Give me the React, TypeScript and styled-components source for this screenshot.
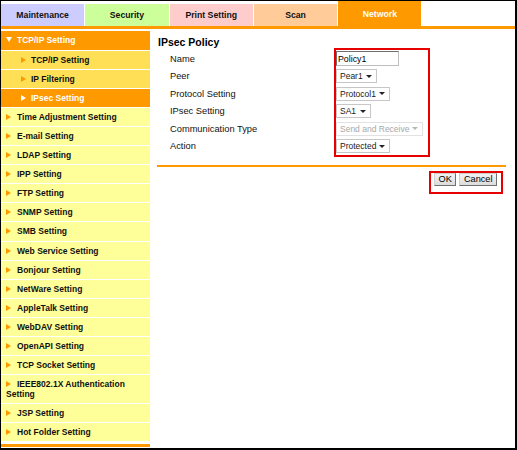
import React from "react";
import styled, { createGlobalStyle } from "styled-components";

const GlobalStyle = createGlobalStyle`
  html, body { margin: 0; padding: 0; background: #fff; }
  body { font-family: "Liberation Sans", Arial, sans-serif; }
  * { box-sizing: border-box; }
`;

const ORANGE = "#ff9900";
const RED = "#e60000";

const Frame = styled.div`
  width: 517px;
  height: 450px;
  border-style: solid;
  border-color: #000;
  border-width: 1px 2px 2px 1px;
  background: #fff;
  display: flex;
  flex-direction: column;
  overflow: hidden;
`;

const TabBar = styled.div`
  display: flex;
  align-items: flex-end;
  gap: 1px;
  height: 28px;
  border-bottom: 3px solid ${ORANGE};
`;

const Tab = styled.div<{ $bg: string; $active?: boolean }>`
  width: 83.3px;
  height: ${(p) => (p.$active ? 25 : 22)}px;
  background: ${(p) => p.$bg};
  color: ${(p) => (p.$active ? "#fff" : "#111")};
  font-size: 8.7px;
  font-weight: bold;
  display: flex;
  align-items: center;
  justify-content: center;
`;

const Body = styled.div`
  display: flex;
  flex: 1;
  margin-top: 2px;
`;

const Sidebar = styled.nav`
  width: 149px;
  display: flex;
  flex-direction: column;
`;

type Variant = "header" | "sub" | "subActive" | "main";

const rowBg: Record<Variant, string> = {
  header: ORANGE,
  sub: "#ffdf55",
  subActive: ORANGE,
  main: "#ffff99",
};

const NavRow = styled.div<{ $variant: Variant }>`
  background: ${(p) => rowBg[p.$variant]};
  color: ${(p) => (p.$variant === "header" || p.$variant === "subActive" ? "#fff" : "#111")};
  border-bottom: 1px solid #fff;
  padding: ${(p) => (p.$variant === "header" ? "4px 4px 5px" : "4px 4px 4px")};
  padding-left: ${(p) => (p.$variant === "sub" || p.$variant === "subActive" ? 20 : 5)}px;
  font-size: 8.5px;
  font-weight: bold;
  line-height: 10.05px;
`;

const RightArrow = styled.span<{ $light?: boolean; $gap: number }>`
  display: inline-block;
  width: 0;
  height: 0;
  border-left: 5px solid ${(p) => (p.$light ? "#fff" : ORANGE)};
  border-top: 3px solid transparent;
  border-bottom: 3px solid transparent;
  margin-right: ${(p) => p.$gap}px;
  vertical-align: 0px;
`;

const DownArrow = styled.span`
  display: inline-block;
  width: 0;
  height: 0;
  border-top: 5px solid #fff;
  border-left: 3px solid transparent;
  border-right: 3px solid transparent;
  margin-right: 5px;
  vertical-align: 1px;
`;

const SidebarFoot = styled.div`
  height: 3px;
  margin-top: 2px;
  background: ${ORANGE};
`;

const Content = styled.main`
  flex: 1;
  padding: 0 9px 0 7px;
  display: flex;
  flex-direction: column;
`;

const Title = styled.h1`
  margin: 5px 0 0 0;
  padding-left: 1px;
  font-size: 10.5px;
  line-height: 12px;
  font-weight: bold;
  color: #000;
`;

const FormRow = styled.div`
  display: flex;
`;

const LabelColumn = styled.div`
  width: 177px;
  padding: 2px 0 0 13px;
  display: flex;
  flex-direction: column;
`;

const Label = styled.div`
  height: 17.5px;
  display: flex;
  align-items: center;
  font-size: 9.3px;
  color: #111;
`;

const ControlBox = styled.div`
  width: 96px;
  border: 2px solid ${RED};
  display: flex;
  flex-direction: column;
`;

const ControlRow = styled.div`
  height: 17.5px;
  display: flex;
  align-items: center;
`;

const TextInput = styled.input`
  width: 63px;
  height: 15px;
  margin: 0;
  padding: 0 1px;
  border: 1px solid;
  border-color: #6f6f6f #bdbdbd #bdbdbd #6f6f6f;
  font-family: "Liberation Sans", Arial, sans-serif;
  font-size: 8.8px;
  color: #000;
  background: #fff;
  outline: none;
`;

const SelectBox = styled.span<{ $w: number; $disabled?: boolean }>`
  width: ${(p) => p.$w}px;
  height: 14px;
  display: inline-flex;
  align-items: center;
  padding: 0 4px 0 3px;
  border: 1px solid ${(p) => (p.$disabled ? "#e2e2e2" : "#c6c6c6")};
  background: #fff;
  font-size: 8.5px;
  color: ${(p) => (p.$disabled ? "#a8a8a8" : "#1a1a1a")};
  white-space: nowrap;
`;

const Caret = styled.span<{ $disabled?: boolean }>`
  margin-left: auto;
  width: 0;
  height: 0;
  border-top: 3px solid ${(p) => (p.$disabled ? "#b8b8b8" : "#222")};
  border-left: 3px solid transparent;
  border-right: 3px solid transparent;
`;

const Rule = styled.div`
  height: 2px;
  margin-top: 8px;
  background: ${ORANGE};
`;

const ButtonRow = styled.div`
  display: flex;
  justify-content: flex-end;
  padding-right: 3px;
  margin-top: 4px;
`;

const ButtonBox = styled.div`
  display: flex;
  gap: 3px;
  border: 2px solid ${RED};
  padding: 0 4px 6px 3px;
`;

const Button = styled.button`
  height: 13px;
  margin: 0;
  padding: 0 3.5px;
  font-family: "Liberation Sans", Arial, sans-serif;
  font-size: 9.2px;
  line-height: 11px;
  color: #000;
  background: linear-gradient(#f2f2f2, #dcdcdc);
  border: 1px solid;
  border-color: #cfcfcf #707070 #707070 #cfcfcf;
`;

const tabs = [
  { label: "Maintenance", bg: "#ccccff" },
  { label: "Security", bg: "#ccff99" },
  { label: "Print Setting", bg: "#ffcccc" },
  { label: "Scan", bg: "#ffcc99" },
  { label: "Network", bg: ORANGE, active: true },
];

const mainItems = [
  "Time Adjustment Setting",
  "E-mail Setting",
  "LDAP Setting",
  "IPP Setting",
  "FTP Setting",
  "SNMP Setting",
  "SMB Setting",
  "Web Service Setting",
  "Bonjour Setting",
  "NetWare Setting",
  "AppleTalk Setting",
  "WebDAV Setting",
  "OpenAPI Setting",
  "TCP Socket Setting",
  "IEEE802.1X Authentication Setting",
  "JSP Setting",
  "Hot Folder Setting",
];

const labels = ["Name", "Peer", "Protocol Setting", "IPsec Setting", "Communication Type", "Action"];

export default function App() {
  return (
    <>
      <GlobalStyle />
      <Frame>
        <TabBar>
          {tabs.map((t) => (
            <Tab key={t.label} $bg={t.bg} $active={t.active}>
              {t.label}
            </Tab>
          ))}
        </TabBar>
        <Body>
          <Sidebar>
            <NavRow $variant="header">
              <DownArrow />
              TCP/IP Setting
            </NavRow>
            <NavRow $variant="sub">
              <RightArrow $gap={5} />
              TCP/IP Setting
            </NavRow>
            <NavRow $variant="sub">
              <RightArrow $gap={5} />
              IP Filtering
            </NavRow>
            <NavRow $variant="subActive">
              <RightArrow $gap={5} $light />
              IPsec Setting
            </NavRow>
            {mainItems.map((m) => (
              <NavRow key={m} $variant="main">
                <RightArrow $gap={6} />
                {m}
              </NavRow>
            ))}
            <SidebarFoot />
          </Sidebar>
          <Content>
            <Title>IPsec Policy</Title>
            <FormRow>
              <LabelColumn>
                {labels.map((l) => (
                  <Label key={l}>{l}</Label>
                ))}
              </LabelColumn>
              <ControlBox>
                <ControlRow>
                  <TextInput defaultValue="Policy1" />
                </ControlRow>
                <ControlRow>
                  <SelectBox $w={41}>
                    Pear1
                    <Caret />
                  </SelectBox>
                </ControlRow>
                <ControlRow>
                  <SelectBox $w={54}>
                    Protocol1
                    <Caret />
                  </SelectBox>
                </ControlRow>
                <ControlRow>
                  <SelectBox $w={35}>
                    SA1
                    <Caret />
                  </SelectBox>
                </ControlRow>
                <ControlRow>
                  <SelectBox $w={87} $disabled>
                    Send and Receive
                    <Caret $disabled />
                  </SelectBox>
                </ControlRow>
                <ControlRow>
                  <SelectBox $w={54}>
                    Protected
                    <Caret />
                  </SelectBox>
                </ControlRow>
              </ControlBox>
            </FormRow>
            <Rule />
            <ButtonRow>
              <ButtonBox>
                <Button>OK</Button>
                <Button>Cancel</Button>
              </ButtonBox>
            </ButtonRow>
          </Content>
        </Body>
      </Frame>
    </>
  );
}
